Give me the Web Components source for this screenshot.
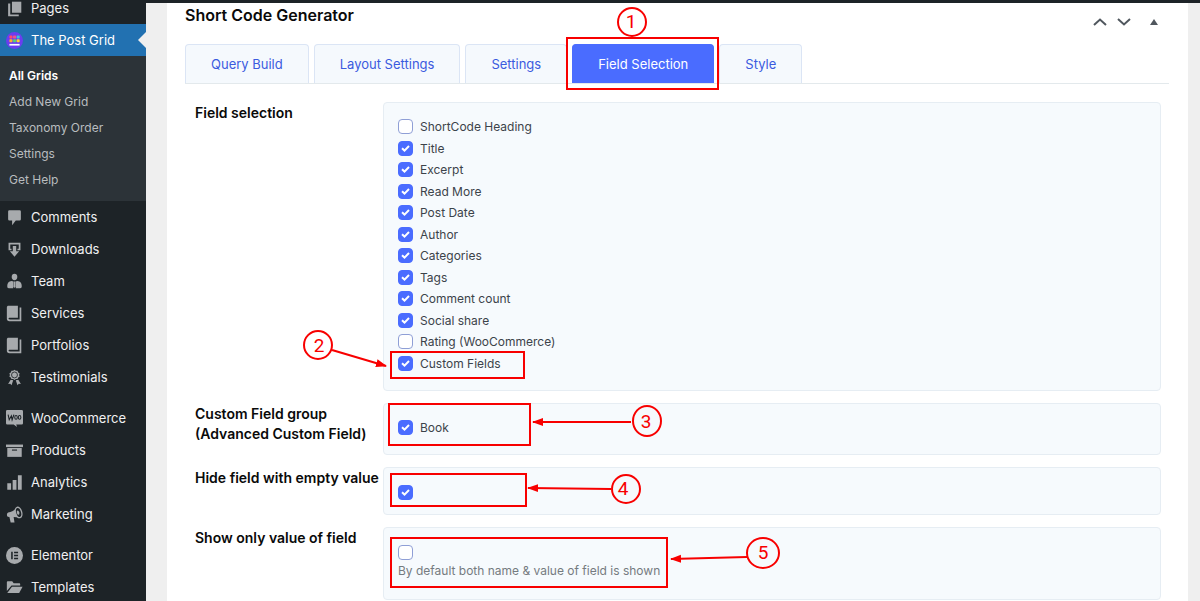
<!DOCTYPE html>
<html lang="en">
<head>
<meta charset="utf-8">
<meta name="viewport" content="width=device-width, initial-scale=1">
<title>Short Code Generator</title>
<style>
  html {
    height: 100%;
    overflow: hidden;
  }

  body {
    margin: 0;
    min-height: 100%;
    font-family: Inter, "Liberation Sans", sans-serif;
    font-size: 14px;
    color: #2c3338;
    background: #efefef;
  }
</style>
</head>
<body>
<grid-admin-page>
  <admin-menu slot="menu">
    <admin-menu-item icon="pages">Pages</admin-menu-item>
    <admin-menu-item icon="grid" current>The Post Grid</admin-menu-item>
    <admin-submenu>
      <admin-submenu-item current>All Grids</admin-submenu-item>
      <admin-submenu-item>Add New Grid</admin-submenu-item>
      <admin-submenu-item>Taxonomy Order</admin-submenu-item>
      <admin-submenu-item>Settings</admin-submenu-item>
      <admin-submenu-item>Get Help</admin-submenu-item>
    </admin-submenu>
    <admin-menu-item icon="comments">Comments</admin-menu-item>
    <admin-menu-item icon="downloads">Downloads</admin-menu-item>
    <admin-menu-item icon="team">Team</admin-menu-item>
    <admin-menu-item icon="book">Services</admin-menu-item>
    <admin-menu-item icon="book">Portfolios</admin-menu-item>
    <admin-menu-item icon="award">Testimonials</admin-menu-item>
    <admin-menu-item icon="woo" separated>WooCommerce</admin-menu-item>
    <admin-menu-item icon="archive">Products</admin-menu-item>
    <admin-menu-item icon="chart">Analytics</admin-menu-item>
    <admin-menu-item icon="megaphone">Marketing</admin-menu-item>
    <admin-menu-item icon="elementor" separated>Elementor</admin-menu-item>
    <admin-menu-item icon="folder">Templates</admin-menu-item>
  </admin-menu>

  <meta-box heading="Short Code Generator">
    <tab-bar>
      <tab-item>Query Build</tab-item>
      <tab-item>Layout Settings</tab-item>
      <tab-item>Settings</tab-item>
      <tab-item selected>Field Selection</tab-item>
      <tab-item>Style</tab-item>
    </tab-bar>
    <field-rows>
      <field-row heading="Field selection" list>
        <check-option label="ShortCode Heading"></check-option>
        <check-option label="Title" checked></check-option>
        <check-option label="Excerpt" checked></check-option>
        <check-option label="Read More" checked></check-option>
        <check-option label="Post Date" checked></check-option>
        <check-option label="Author" checked></check-option>
        <check-option label="Categories" checked></check-option>
        <check-option label="Tags" checked></check-option>
        <check-option label="Comment count" checked></check-option>
        <check-option label="Social share" checked></check-option>
        <check-option label="Rating (WooCommerce)"></check-option>
        <check-option label="Custom Fields" checked></check-option>
      </field-row>
      <field-row heading="Custom Field group (Advanced Custom Field)">
        <check-option label="Book" checked></check-option>
      </field-row>
      <field-row heading="Hide field with empty value" single>
        <check-option name="Hide field with empty value" checked></check-option>
      </field-row>
      <field-row heading="Show only value of field" single>
        <check-option name="Show only value of field"></check-option>
        <help-text>By default both name &amp; value of field is shown</help-text>
      </field-row>
    </field-rows>
  </meta-box>

  <step-marks slot="marks"></step-marks>
</grid-admin-page>

<script>
const ICONS = {
  pages: `<path d="M7 2h11v13H7z"/><path d="M2.500 4H5v13h10v2H2.500z"/>`,
  grid: `
    <circle cx="10" cy="10" r="10" fill="#6b3df0"/>
    <rect x="4" y="4" width="3.600" height="3.600" rx=".8" fill="#ff4d6a"/>
    <rect x="8.300" y="4" width="3.600" height="3.600" rx=".8" fill="#f0508c"/>
    <rect x="12.500" y="4" width="3.600" height="3.600" rx=".8" fill="#35c9d8"/>
    <rect x="4" y="8.500" width="3.600" height="3.600" rx=".8" fill="#ffb02e"/>
    <rect x="8.300" y="8.500" width="3.600" height="3.600" rx=".8" fill="#52d273"/>
    <rect x="12.500" y="8.500" width="3.600" height="3.600" rx=".8" fill="#ffd02e"/>
    <path d="M4 14h12v2H4z" fill="#fff"/>`,
  comments: `<path d="M4 1.500h12A1.500 1.500 0 0 1 17.500 3v9a1.500 1.500 0 0 1-1.500 1.500h-4.500L7.200 19v-5.500H4A1.500 1.500 0 0 1 2.500 12V3A1.500 1.500 0 0 1 4 1.500z"/>`,
  downloads: `<path d="M3 2h14v9h-3.500V9H15V4H5v5h1.500v2H3z"/><path d="M8 6h4v6h3.500L10 18.500 4.500 12H8z"/>`,
  team: `<path d="M10 1c2 0 3.300 1.500 3.300 3.600S12 8.500 10 8.500 6.700 6.700 6.700 4.600 8 1 10 1z"/><path d="M6.500 9.300 9 10l-.5 8H3.500C1.500 18 1.500 16.500 1.500 15c0-3 1.500-5.300 5-5.700zM13.500 9.300c3.500.4 5 2.700 5 5.700 0 1.500 0 3-2 3h-5L11 10z"/><path d="M9.400 10h1.200l.6 6-1.200 1.500L8.800 16z"/>`,
  book: `<path d="M3 1h11v14H4.500C3.500 15 3 15.500 3 16c0 .6.500 1 1.500 1H16V3h2v16H4c-2 0-3-1-3-2.500V3c0-1.200.8-2 2-2z"/>`,
  award: `<path d="M10 1l1.600 1.200 2-.1.700 1.900 1.700 1.100-.6 1.900.6 2-1.700 1.100-.7 1.800-2-.1L10 13l-1.600-1.200-2 .1-.7-1.800L4 9l.6-2L4 5.100 5.700 4l.7-1.900 2 .1z"/><circle cx="10" cy="7" r="3.500" fill="none" stroke="#1d2327" stroke-width="1"/><path d="M5.500 12.500l3 .8-2 5.700-1.500-1.700-2.500.2zM14.500 12.500l-3 .8 2 5.700 1.500-1.700 2.500.2z"/>`,
  woo: `<path d="M1.500 0h17A1.500 1.500 0 0 1 20 1.500v14a1.500 1.500 0 0 1-1.500 1.500H12l1 3-4-3H1.500A1.500 1.500 0 0 1 0 15.500v-14A1.500 1.500 0 0 1 1.500 0z"/><path d="M2.500 5.500l1.300 6 2.500-4.700.9 4.700L9.300 5.500" fill="none" stroke="#1d2327" stroke-width="1.300"/><ellipse cx="11.800" cy="8.700" rx="1.500" ry="2.300" fill="none" stroke="#1d2327" stroke-width="1.200"/><ellipse cx="16" cy="8.700" rx="1.500" ry="2.300" fill="none" stroke="#1d2327" stroke-width="1.200"/>`,
  archive: `<path d="M0 3h20v3H0z"/><path d="M1.500 7h17v10.500h-17z"/><path d="M7 9.500h6" stroke="#1d2327" stroke-width="1.300"/>`,
  chart: `<path d="M1.500 11H6v7.500H1.500zM7.800 7h4.500v11.500H7.800zM14 1.500h4.500v17H14z"/>`,
  megaphone: `<path d="M12 2.500C9 5.500 6 7 2.500 7.500.8 8.500.6 11 2 12.500l2 .5 1.500 6.500H10L9 13c2 0 4 .2 6.500.8z"/><ellipse cx="14.800" cy="7.600" rx="3.600" ry="6.300" transform="rotate(-16 14.800 7.600)" fill="#1d2327" stroke="#a7aaad" stroke-width="1.600"/><ellipse cx="14.200" cy="7.800" rx="1.400" ry="2.600" transform="rotate(-16 14.200 7.800)"/>`,
  elementor: `<circle cx="10" cy="10" r="10"/><path d="M7 5.500v9M9.500 6.500h4.700M9.500 10h4.700M9.500 13.500h4.700" fill="none" stroke="#1d2327" stroke-width="1.800"/>`,
  folder: `<path d="M1 4c0-.8.500-1.300 1.300-1.300h5L9 5h6.500c.7 0 1.200.5 1.200 1.200V7.500H6.500L1 14z"/><path d="M7 9h12.500l-4 7.500H1.500z"/>`,
};

// Builds a template once; every element clones it in its constructor.
function template(html) {
  const $template = document.createElement('template');
  $template.innerHTML = html;
  return $template;
}

class BaseElement extends HTMLElement {
  constructor() {
    super();
    this.attachShadow({ mode: 'open' });
    this.shadowRoot.appendChild(this.constructor.template.content.cloneNode(true));
  }

  $(selector) {
    return this.shadowRoot.querySelector(selector);
  }
}

class GridAdminPage extends BaseElement {
  static template = template(`
    <style>
      :host {
        display: flex;
        position: relative;
        min-height: 100vh;
      }

      .content {
        flex: 1;
        min-width: 0;
        display: flex;
        flex-direction: column;
      }

      .toolbar {
        height: 3px;
        background: #1d2327;
      }

      main {
        flex: 1;
        display: flex;
        padding: 0 12px 0 21px;
      }
    </style>
    <slot name="menu"></slot>
    <div class="content">
      <div class="toolbar"></div>
      <main><slot></slot></main>
    </div>
    <slot name="marks"></slot>
  `);
}

class AdminMenu extends BaseElement {
  static template = template(`
    <style>
      :host {
        display: block;
        flex: none;
        width: 146px;
        background: #1d2327;
      }

      /* the menu is scrolled a little past its start */
      nav {
        margin-top: -8px;
      }
    </style>
    <nav aria-label="Main menu"><slot></slot></nav>
  `);
}

class AdminMenuItem extends BaseElement {
  static template = template(`
    <style>
      :host {
        display: block;
      }

      :host([separated]) {
        margin-top: 9px;
      }

      a {
        display: flex;
        align-items: center;
        gap: 8px;
        height: 32px;
        padding-left: 6px;
        position: relative;
        color: #f0f0f1;
        font-size: 13px;
        line-height: 20px;
        text-decoration: none;
        white-space: nowrap;
      }

      svg {
        width: 17px;
        height: 17px;
        fill: #a7aaad;
      }

      :host([current]) a {
        background: #2271b1;
        color: #fff;
      }

      :host([current]) a::after {
        content: "";
        position: absolute;
        right: 0;
        top: 8px;
        border: 8px solid transparent;
        border-left-width: 0;
        border-right-color: #efefef;
      }
    </style>
    <a href="#">
      <svg viewBox="0 0 20 20" aria-hidden="true"></svg>
      <span><slot></slot></span>
    </a>
  `);

  connectedCallback() {
    this.$('svg').innerHTML = ICONS[this.getAttribute('icon')];
  }
}

class AdminSubmenu extends BaseElement {
  static template = template(`
    <style>
      :host {
        display: block;
        padding: 7px 0 8px;
        background: #2c3338;
      }
    </style>
    <slot></slot>
  `);
}

class AdminSubmenuItem extends BaseElement {
  static template = template(`
    <style>
      :host {
        display: block;
      }

      a {
        display: block;
        padding-left: 9px;
        color: #b8bcbf;
        font-size: 12px;
        line-height: 26px;
        text-decoration: none;
      }

      :host([current]) a {
        color: #fff;
        font-weight: 600;
      }
    </style>
    <a href="#"><slot></slot></a>
  `);
}

class MetaBox extends BaseElement {
  static template = template(`
    <style>
      :host {
        display: block;
        flex: 1;
        min-width: 0;
        padding: 0 19px 0 18px;
        background: #fff;
      }

      header {
        display: flex;
        justify-content: space-between;
        height: 41px;
      }

      h2 {
        margin: 0;
        color: #0a0a0a;
        font-size: 16px;
        font-weight: 600;
        line-height: 25px;
      }

      .actions {
        display: flex;
        padding: 7px 3px 0 0;
      }

      button {
        display: grid;
        place-items: center;
        width: 24px;
        height: 24px;
        padding: 0;
        border: 0;
        background: none;
        color: #50575e;
        cursor: pointer;
      }

      .toggle {
        margin-left: 6px;
      }
    </style>
    <header>
      <h2></h2>
      <div class="actions">
        <button type="button" aria-label="Move up">
          <svg width="14" height="8" viewBox="0 0 14 8" fill="none" stroke="currentColor" stroke-width="2"><path d="M1 7l6-5.500L13 7"/></svg>
        </button>
        <button type="button" aria-label="Move down">
          <svg width="14" height="8" viewBox="0 0 14 8" fill="none" stroke="currentColor" stroke-width="2"><path d="M1 1l6 5.500L13 1"/></svg>
        </button>
        <button type="button" class="toggle" aria-label="Toggle panel">
          <svg width="8" height="6" viewBox="0 0 8 6" fill="currentColor"><path d="M4 0l4 6H0z"/></svg>
        </button>
      </div>
    </header>
    <slot></slot>
  `);

  connectedCallback() {
    this.$('h2').textContent = this.getAttribute('heading');
  }
}

class TabBar extends BaseElement {
  static template = template(`
    <style>
      :host {
        display: flex;
        gap: 5px;
        border-bottom: 1px solid #e3e9ec;
      }
    </style>
    <slot></slot>
  `);

  connectedCallback() {
    this.setAttribute('role', 'tablist');
    this.addEventListener('click', (event) => {
      const tab = event.target.closest('tab-item');
      if (!tab) return;
      this.querySelectorAll('tab-item').forEach((item) => {
        item.toggleAttribute('selected', item === tab);
      });
    });
  }
}

class TabItem extends BaseElement {
  static template = template(`
    <style>
      :host {
        display: block;
      }

      button {
        height: 39px;
        padding: 0 25px;
        border: 1px solid #dbe5f5;
        border-bottom: 0;
        border-radius: 4px 4px 0 0;
        background: #f5f9fd;
        color: #3b5bdf;
        font: inherit;
        font-size: 13px;
        cursor: pointer;
        white-space: nowrap;
      }

      :host([selected]) button {
        background: #4a6cff;
        border-color: #4a6cff;
        color: #fff;
      }
    </style>
    <button type="button" role="tab"><slot></slot></button>
  `);

  static observedAttributes = ['selected'];

  attributeChangedCallback() {
    this.$('button').setAttribute('aria-selected', this.hasAttribute('selected'));
  }
}

class FieldRows extends BaseElement {
  static template = template(`
    <style>
      :host {
        display: flex;
        flex-direction: column;
        gap: 12px;
        padding: 18px 8px 12px 10px;
      }
    </style>
    <slot></slot>
  `);
}

class FieldRow extends BaseElement {
  static template = template(`
    <style>
      :host {
        display: flex;
      }

      h3 {
        flex: none;
        width: 188px;
        margin: 0;
        padding-top: 1px;
        color: #0a0a0a;
        font-size: 14px;
        font-weight: 600;
        line-height: 20px;
      }

      .box {
        flex: 1;
        padding: 13px 14px 16px;
        border: 1px solid #e6edf3;
        border-radius: 4px;
        background: #f6fafd;
      }

      :host([list]) .box {
        display: grid;
        grid-auto-rows: 1fr;
        min-height: 258px;
      }

      :host([single]) .box {
        padding: 16px 14px 14px;
      }
    </style>
    <h3></h3>
    <div class="box"><slot></slot></div>
  `);

  connectedCallback() {
    this.$('h3').textContent = this.getAttribute('heading');
  }
}

class CheckOption extends BaseElement {
  static template = template(`
    <style>
      :host {
        display: flex;
        align-items: center;
      }

      label {
        display: flex;
        align-items: center;
        gap: 7px;
        color: #3c434a;
        font-size: 12px;
      }

      .mark {
        display: grid;
        place-items: center;
        height: 16px;
      }

      input,
      svg {
        grid-area: 1 / 1;
      }

      input {
        appearance: none;
        width: 15px;
        height: 15px;
        margin: 0;
        border: 1px solid #8f9fd6;
        border-radius: 4px;
        background: #fff;
      }

      input:checked {
        background: #4a6cff;
        border-color: #4a6cff;
      }

      svg {
        width: 9px;
        height: 7px;
        fill: none;
        stroke: #fff;
        stroke-width: 2;
        pointer-events: none;
      }

      input:not(:checked) + svg {
        visibility: hidden;
      }

      .text {
        line-height: 21px;
      }

      .text:empty {
        display: none;
      }
    </style>
    <label>
      <span class="mark">
        <input type="checkbox">
        <svg viewBox="0 0 9 7" aria-hidden="true"><path d="M1 3.300l2.500 2.300L8 1"/></svg>
      </span>
      <span class="text"></span>
    </label>
  `);

  connectedCallback() {
    const $input = this.$('input');
    $input.checked = this.hasAttribute('checked');
    this.$('.text').textContent = this.getAttribute('label') || '';
    if (this.hasAttribute('name')) {
      $input.setAttribute('aria-label', this.getAttribute('name'));
    }
  }
}

class HelpText extends BaseElement {
  static template = template(`
    <style>
      :host {
        display: block;
        margin-bottom: 3px;
        color: #757b80;
        font-size: 12px;
        line-height: 22px;
      }
    </style>
    <slot></slot>
  `);
}

// Numbered callouts that lie over the page.
class StepMarks extends BaseElement {
  static template = template(`
    <style>
      :host {
        position: absolute;
        left: 0;
        top: 0;
        pointer-events: none;
      }

      svg {
        display: block;
        fill: none;
        stroke: #f80000;
        stroke-width: 2;
      }

      text {
        fill: #f80000;
        stroke: none;
        font-family: Roboto, "Liberation Sans", sans-serif;
        font-size: 19px;
        text-anchor: middle;
      }
    </style>
    <svg width="800" height="600" viewBox="0 0 800 600">
      <defs>
        <marker id="head" markerUnits="userSpaceOnUse" markerWidth="12" markerHeight="10" refX="10" refY="5" orient="auto">
          <path d="M0 1l11 4-11 4z" fill="#f80000" stroke="none"/>
        </marker>
      </defs>
      <rect x="567" y="38" width="151" height="51"/>
      <rect x="391" y="352" width="133" height="26"/>
      <rect x="389" y="404" width="141" height="41"/>
      <rect x="391" y="474" width="135" height="32"/>
      <rect x="391" y="538" width="276" height="49"/>
      <circle cx="632" cy="22" r="14"/>
      <circle cx="318" cy="345" r="14"/>
      <ellipse cx="647" cy="421" rx="14" ry="15"/>
      <circle cx="626" cy="489" r="14"/>
      <ellipse cx="763" cy="553" rx="16" ry="15"/>
      <path d="M332 350l54 16" marker-end="url(#head)"/>
      <path d="M631 422H533" marker-end="url(#head)"/>
      <path d="M611 489l-83-1" marker-end="url(#head)"/>
      <path d="M747 557l-76 2" marker-end="url(#head)"/>
      <text x="631" y="28">1</text>
      <text x="319" y="352">2</text>
      <text x="646" y="428">3</text>
      <text x="623" y="495">4</text>
      <text x="763" y="559">5</text>
    </svg>
  `);
}

customElements.define('grid-admin-page', GridAdminPage);
customElements.define('admin-menu', AdminMenu);
customElements.define('admin-menu-item', AdminMenuItem);
customElements.define('admin-submenu', AdminSubmenu);
customElements.define('admin-submenu-item', AdminSubmenuItem);
customElements.define('meta-box', MetaBox);
customElements.define('tab-bar', TabBar);
customElements.define('tab-item', TabItem);
customElements.define('field-rows', FieldRows);
customElements.define('field-row', FieldRow);
customElements.define('check-option', CheckOption);
customElements.define('help-text', HelpText);
customElements.define('step-marks', StepMarks);
</script>
</body>
</html>
